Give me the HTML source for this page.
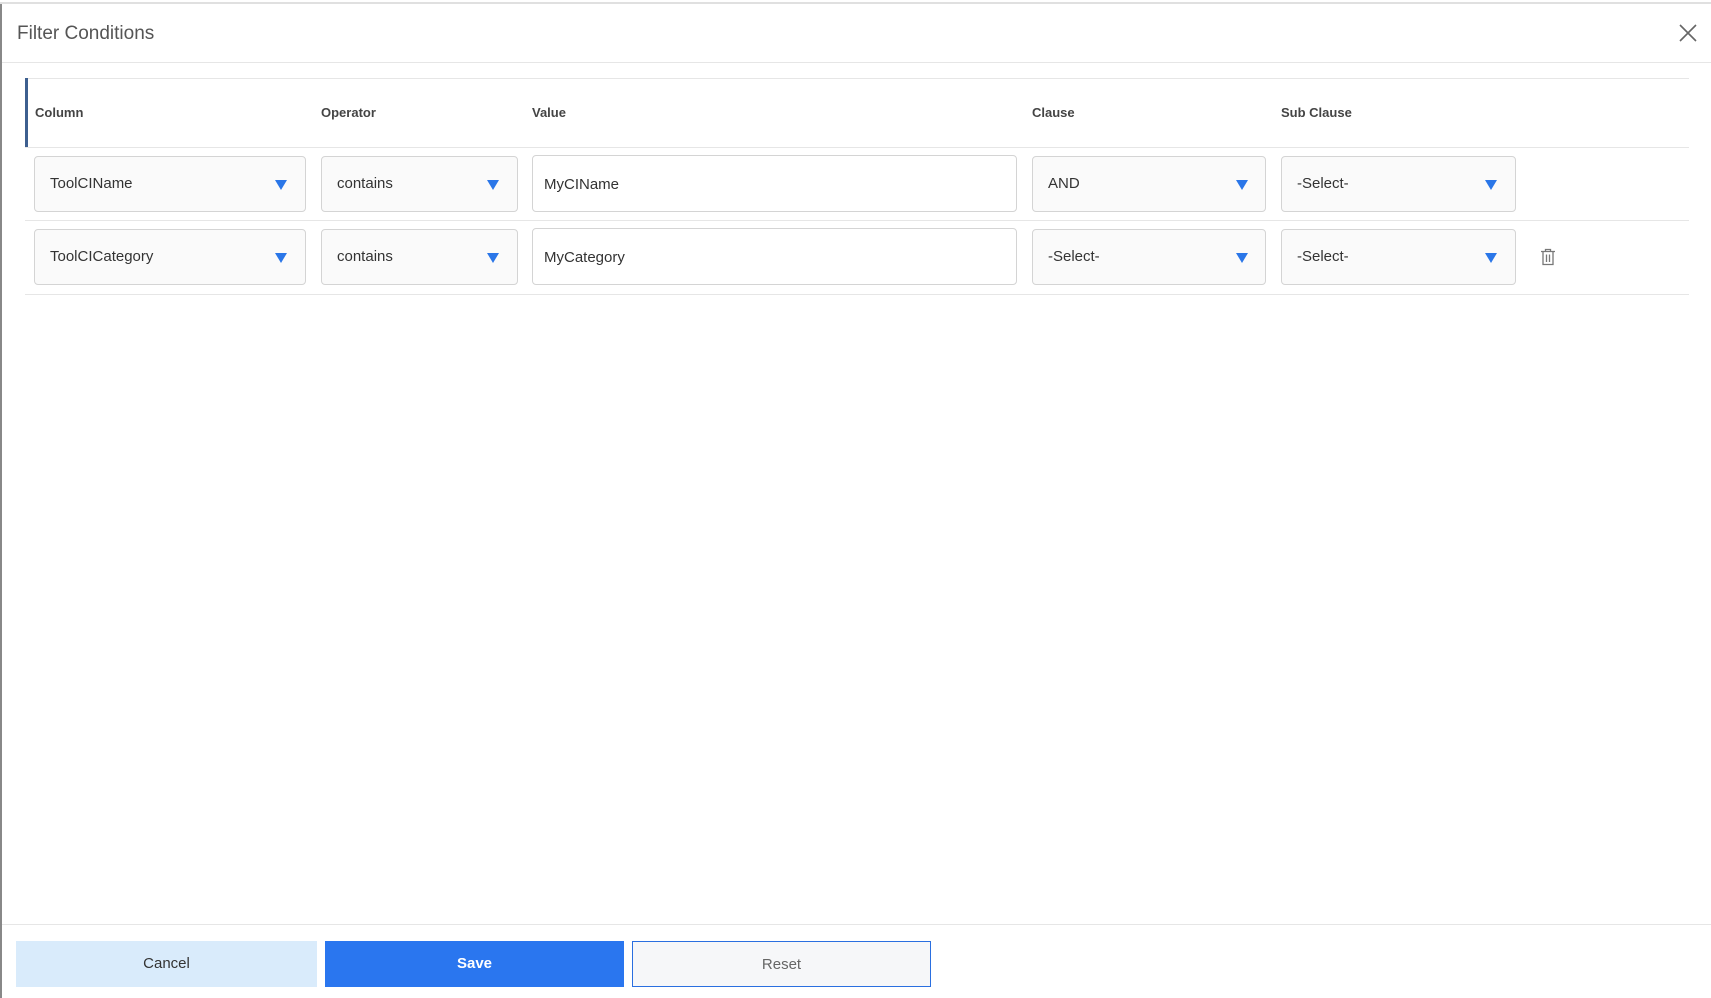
<!DOCTYPE html>
<html><head><style>
body{margin:0;width:1711px;height:998px;background:#fff;position:relative;overflow:hidden;font-family:"Liberation Sans",sans-serif;}
.a{position:absolute;}
.hdr{font-weight:bold;font-size:13px;color:#444;top:105px;}
.box{position:absolute;box-sizing:border-box;border:1px solid #d4d4d4;border-radius:4px;background:#fafafa;font-size:15px;color:#333;line-height:53px;padding-left:15px;}
.val{background:#fff;padding-left:11px;line-height:57px;}
.tri{position:absolute;top:23px;width:0;height:0;border-left:6px solid transparent;border-right:6px solid transparent;border-top:10px solid #2a76e8;}
.line{position:absolute;height:1px;background:#e6e6e6;}
.btn{position:absolute;top:941px;height:46px;box-sizing:border-box;font-size:15px;text-align:center;line-height:46px;}
</style></head><body>
<div class="a" style="left:0;top:2px;width:1711px;height:2px;background:#e0e0e0"></div>
<div class="a" style="left:0;top:4px;width:2px;height:994px;background:#888"></div>
<div class="a" style="left:17px;top:23px;font-size:19px;color:#555">Filter Conditions</div>
<svg class="a" style="left:1679px;top:24px" width="18" height="18"><path d="M1 1L17 17M17 1L1 17" stroke="#666" stroke-width="1.6"/></svg>
<div class="line" style="left:2px;top:62px;width:1709px"></div>
<div class="line" style="left:25px;top:78px;width:1664px"></div>
<div class="a" style="left:25px;top:78px;width:3px;height:70px;background:#3d5f8f"></div>
<div class="a hdr" style="left:35px">Column</div>
<div class="a hdr" style="left:321px">Operator</div>
<div class="a hdr" style="left:532px">Value</div>
<div class="a hdr" style="left:1032px">Clause</div>
<div class="a hdr" style="left:1281px">Sub Clause</div>
<div class="line" style="left:25px;top:147px;width:1664px"></div>

<div class="box" style="left:34px;top:156px;width:272px;height:56px">ToolCIName<div class="tri" style="left:240px"></div></div>
<div class="box" style="left:321px;top:156px;width:197px;height:56px">contains<div class="tri" style="left:165px"></div></div>
<div class="box val" style="left:532px;top:155px;width:485px;height:57px">MyCIName</div>
<div class="box" style="left:1032px;top:156px;width:234px;height:56px">AND<div class="tri" style="left:203px"></div></div>
<div class="box" style="left:1281px;top:156px;width:235px;height:56px">-Select-<div class="tri" style="left:203px"></div></div>
<div class="line" style="left:25px;top:220px;width:1664px"></div>

<div class="box" style="left:34px;top:229px;width:272px;height:56px">ToolCICategory<div class="tri" style="left:240px"></div></div>
<div class="box" style="left:321px;top:229px;width:197px;height:56px">contains<div class="tri" style="left:165px"></div></div>
<div class="box val" style="left:532px;top:228px;width:485px;height:57px">MyCategory</div>
<div class="box" style="left:1032px;top:229px;width:234px;height:56px">-Select-<div class="tri" style="left:203px"></div></div>
<div class="box" style="left:1281px;top:229px;width:235px;height:56px">-Select-<div class="tri" style="left:203px"></div></div>
<svg class="a" style="left:1540px;top:248px" width="16" height="18"><path d="M1 3.5H15M5.5 3.5V1.5H10.5V3.5M3 3.5V16.5H13V3.5M6.5 6.5V14M9.5 6.5V14" stroke="#777" stroke-width="1.3" fill="none"/></svg>
<div class="line" style="left:25px;top:294px;width:1664px"></div>

<div class="line" style="left:2px;top:924px;width:1709px"></div>
<div class="btn" style="left:16px;width:301px;background:#d9ebfb;color:#333">Cancel</div>
<div class="btn" style="left:325px;width:299px;background:#2a76ef;color:#fff;font-weight:bold">Save</div>
<div class="btn" style="left:632px;width:299px;background:#f6f7f9;border:1px solid #2a6fe0;color:#666">Reset</div>
</body></html>
